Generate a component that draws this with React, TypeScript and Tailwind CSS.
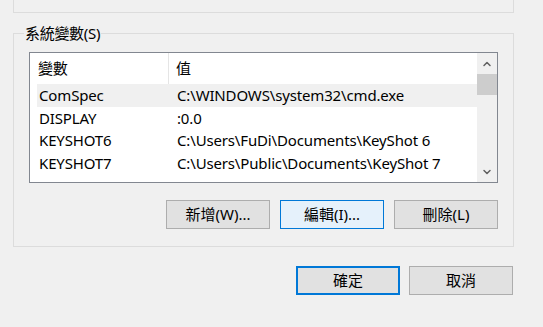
import { ChevronUp, ChevronDown } from 'lucide-react';

const rows = [
  { name: 'ComSpec', value: 'C:\\WINDOWS\\system32\\cmd.exe', selected: true },
  { name: 'DISPLAY', value: ':0.0' },
  { name: 'KEYSHOT6', value: 'C:\\Users\\FuDi\\Documents\\KeyShot 6' },
  { name: 'KEYSHOT7', value: 'C:\\Users\\Public\\Documents\\KeyShot 7' },
];

function Button({ label, variant = 'normal' }: { label: string; variant?: 'normal' | 'hover' | 'default' }) {
  const styles = {
    normal: 'border border-[#adadad] bg-[#e1e1e1]',
    hover: 'border border-[#0078d7] bg-[#e5f1fb]',
    default: 'border-2 border-[#0078d7] bg-[#e1e1e1]',
  }[variant];
  return (
    <button className={`w-[104px] h-[29px] flex items-center justify-center text-[15px] leading-none text-black ${styles}`}>
      {label}
    </button>
  );
}

export default function App() {
  return (
    <div
      className="w-[543px] h-[327px] bg-[#f0f0f0] overflow-hidden text-black"
      style={{ fontFamily: '"Noto Sans", "Noto Sans CJK TC", sans-serif' }}
    >
      {/* Previous group box, cut off at the top */}
      <div className="ml-[13px] w-[501px] h-[13px] border-x border-b border-[#dcdcdc]" />

      {/* System variables */}
      <fieldset className="ml-[13px] mt-[10px] w-[501px] border border-[#dcdcdc] px-[15px] pt-[9px] pb-[17px]">
        <legend className="ml-[-5px] px-[1px] text-[15px] leading-[20px] tracking-[-0.3px]">系統變數(S)</legend>

        <div className="w-[469px] h-[131px] border border-[#828790] bg-white flex overflow-hidden">
          <div className="flex-1 flex flex-col overflow-hidden text-[15px] tracking-[-0.15px]">
            {/* Header */}
            <div className="h-[31px] shrink-0 flex">
              <div className="w-[139px] h-full pl-[8px] flex items-center border-r border-[#e5e5e5]">變數</div>
              <div className="flex-1 pl-[7px] flex items-center">值</div>
            </div>
            {rows.map((r) => (
              <div
                key={r.name}
                className={`h-[22.5px] shrink-0 ml-[7px] flex items-center whitespace-nowrap ${r.selected ? 'bg-[#f0f0f0]' : ''}`}
              >
                <div className="w-[132px] pl-[2px]">{r.name}</div>
                <div className="flex-1 pl-[8px]">{r.value}</div>
              </div>
            ))}
          </div>

          {/* Scrollbar */}
          <div className="w-[20px] bg-[#f0f0f0] flex flex-col shrink-0">
            <div className="h-[21px] flex items-center justify-center text-[#606060]">
              <ChevronUp size={12} strokeWidth={3} />
            </div>
            <div className="h-[21px] bg-[#cdcdcd]" />
            <div className="flex-1" />
            <div className="h-[21px] flex items-center justify-center text-[#606060]">
              <ChevronDown size={12} strokeWidth={3} />
            </div>
          </div>
        </div>

        <div className="mt-[17px] w-[469px] flex justify-end gap-[10px]">
          <Button label="新增(W)..." />
          <Button label="編輯(I)..." variant="hover" />
          <Button label="刪除(L)" />
        </div>
      </fieldset>

      <div className="ml-[13px] mt-[19px] w-[500px] flex justify-end gap-[9px]">
        <Button label="確定" variant="default" />
        <Button label="取消" />
      </div>
    </div>
  );
}
